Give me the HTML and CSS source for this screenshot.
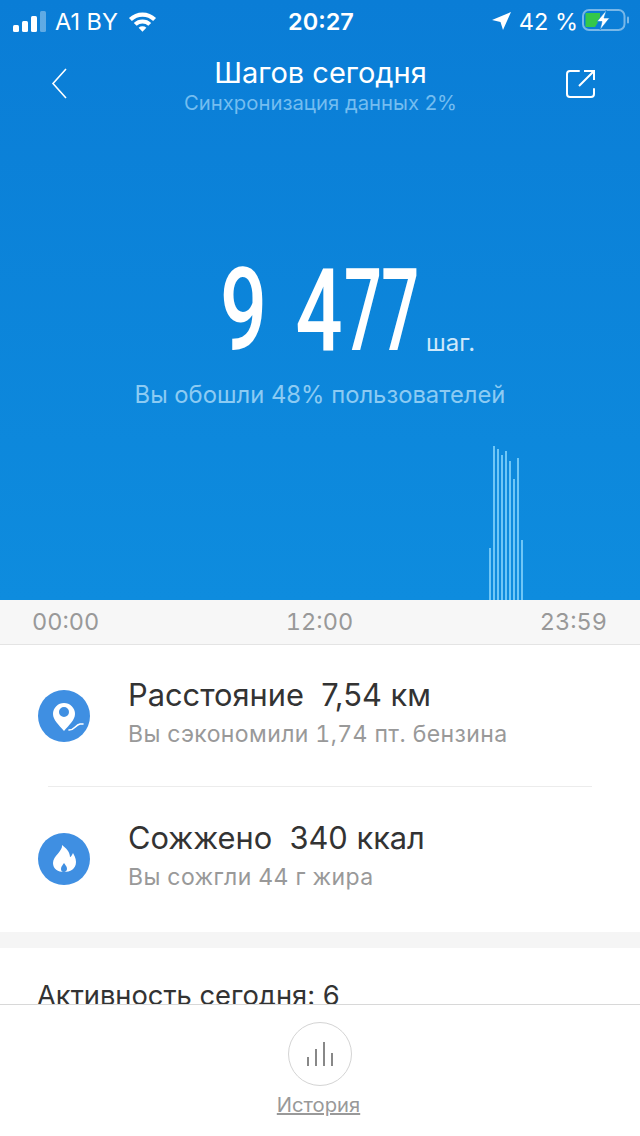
FILE: index.html
```html
<!DOCTYPE html>
<html lang="ru">
<head>
<meta charset="UTF-8">
<meta name="viewport" content="width=device-width, initial-scale=1.0">
<title>Шагов сегодня</title>
<link rel="stylesheet" href="styles.css">
</head>
<body>

<div class="content">
    <section class="hero">
        <div class="status-bar">
            <div class="status-left">
                <svg class="signal" width="34" height="21" viewBox="0 0 34 21">
                    <rect x="0" y="14" width="6" height="7" rx="1.5" fill="#fff"/>
                    <rect x="9" y="10" width="6" height="11" rx="1.5" fill="#fff"/>
                    <rect x="18" y="5" width="6" height="16" rx="1.5" fill="#fff"/>
                    <rect x="27" y="0" width="6" height="21" rx="1.5" fill="#fff" opacity="0.35"/>
                </svg>
                <span>A1 BY</span>
                <svg class="wifi" width="29" height="22" viewBox="0 0 30 22">
                    <path d="M1 8 A20 20 0 0 1 29 8 L26 11 A16 16 0 0 0 4 11 Z" fill="#fff"/>
                    <path d="M6 13 A13 13 0 0 1 24 13 L21 16 A9 9 0 0 0 9 16 Z" fill="#fff"/>
                    <path d="M11 18 A6 6 0 0 1 19 18 L15 22 Z" fill="#fff"/>
                </svg>
            </div>
            <div class="status-time">20:27</div>
            <div class="status-right">
                <svg width="19" height="18" viewBox="0 0 19 18"><path d="M19 0 L11 18 L8.500 10 L0 8 Z" fill="#fff"/></svg>
                <span class="battery-text">42 %</span>
                <svg class="battery" width="47" height="24" viewBox="0 0 47 24">
                    <rect x="1" y="2" width="41.500" height="20" rx="6" fill="none" stroke="#fff" stroke-opacity="0.45" stroke-width="2"/>
                    <rect x="45" y="8.500" width="2" height="7" rx="1" fill="#fff" opacity="0.45"/>
                    <path d="M3.500 5 H18 V11 L13 19 H3.500 Z" fill="#34c84a"/>
                    <path d="M24.500 2 L15 13.500 H20 L18 22 L27.500 10 H22 Z" fill="#fff" stroke="#0a80d8" stroke-width="0.600"/>
                </svg>
            </div>
        </div>

        <header class="nav">
            <svg class="nav-back" width="20" height="32" viewBox="0 0 20 32"><path d="M16 1 L3 15.500 L16 30" fill="none" stroke="#fff" stroke-width="1.600"/></svg>
            <div class="nav-title">
                <h1>Шагов сегодня</h1>
                <p>Синхронизация данных 2%</p>
            </div>
            <svg class="nav-share" width="30" height="30" viewBox="0 0 30 30">
                <path d="M13 2 H4 Q1 2 1 5 V25 Q1 28 4 28 H25 Q28 28 28 25 V20" fill="none" stroke="#fff" stroke-width="2" stroke-linecap="round"/>
                <path d="M13 17 L27 3 M18 2 H28 V11" fill="none" stroke="#fff" stroke-width="2"/>
            </svg>
        </header>

        <div class="steps">
            <div class="steps-count"><span class="digits-wide">9 4</span><span class="digits-narrow">77</span></div>
            <div class="steps-unit">шаг.</div>
        </div>
        <p class="steps-note">Вы обошли 48% пользователей</p>

        <div class="chart">
            <i style="height:52px"></i>
            <i style="height:154px"></i>
            <i style="height:151px"></i>
            <i style="height:145px"></i>
            <i style="height:149px"></i>
            <i style="height:139px"></i>
            <i style="height:121px"></i>
            <i style="height:142px"></i>
            <i style="height:60px"></i>
        </div>
    </section>

    <div class="timeline">
        <span>00:00</span>
        <span>12:00</span>
        <span>23:59</span>
    </div>

    <section class="stats">
        <div class="stat stat-first">
            <svg class="stat-icon" width="52" height="52" viewBox="0 0 52 52">
                <circle cx="26" cy="26" r="26" fill="#3f8fe2"/>
                <path fill-rule="evenodd" d="M26 13 A11 11 0 0 1 37 24 C37 30 31 35 26 41 C21 35 15 30 15 24 A11 11 0 0 1 26 13 Z M26 17 A5 5 0 1 0 26 27 A5 5 0 0 0 26 17 Z" fill="#fff"/>
                <path d="M31 40 C37 40 37 35 42 34 H45" fill="none" stroke="#fff" stroke-width="1.600" stroke-linecap="round"/>
            </svg>
            <div class="stat-text">
                <div class="stat-title">Расстояние&nbsp; 7,54 км</div>
                <div class="stat-sub">Вы сэкономили 1,74 пт. бензина</div>
            </div>
        </div>
        <div class="stat stat-second">
            <svg class="stat-icon" width="52" height="52" viewBox="0 0 52 52">
                <circle cx="26" cy="26" r="26" fill="#3f8fe2"/>
                <path fill-rule="evenodd" d="M24 12 C25 18 15 23 15 30 C15 36 20 39 26 39 C32 39 38 36 38 29 C38 25 36 22 35 20 C34 22 33 24 32 24 C32 19 28 15 24 12 Z M26 30 C27 32 29 33 29 36 C29 38 27 39 26 39 C24 39 23 38 23 36 C23 33 25 32 26 30 Z" fill="#fff"/>
            </svg>
            <div class="stat-text">
                <div class="stat-title">Сожжено&nbsp; 340 ккал</div>
                <div class="stat-sub">Вы сожгли 44 г жира</div>
            </div>
        </div>
    </section>

    <div class="spacer"></div>

    <div class="activity">Активность сегодня: 6</div>
</div>

<nav class="tabbar">
    <div class="tab-circle">
        <svg width="26" height="24" viewBox="0 0 26 24">
            <path d="M1 15 V24 M9 7 V24 M17 0 V24 M25 11 V24" fill="none" stroke="#888" stroke-width="2"/>
        </svg>
    </div>
    <a class="tab-label" href="#">История</a>
</nav>

</body>
</html>
```
FILE: styles.css
```css
* {
    box-sizing: border-box;
}

html,
body {
    margin: 0;
    height: 1136px;
    overflow: hidden;
}

body {
    display: flex;
    flex-direction: column;
    background-color: #fff;
    font-family: Inter, "Noto Sans", sans-serif;
    color: #333;
}

.content {
    flex: 0 0 1004px;
    overflow: hidden;
}

.hero {
    display: flex;
    flex-direction: column;
    height: 600px;
    background: linear-gradient(#0a7dd6, #0e8cde);
    color: #fff;
}

.status-bar {
    display: flex;
    align-items: center;
    justify-content: space-between;
    height: 40px;
    padding: 2px 11px 0 13px;
    font-size: 23.5px;
}

.status-left,
.status-right {
    display: flex;
    align-items: center;
    width: 200px;
}

.status-left span {
    margin: 0 10px 0 8px;
}

.status-right {
    justify-content: flex-end;
}

.battery-text {
    margin: 0 4px 0 8px;
}

.battery {
    margin-top: -2px;
}

.status-time {
    font-weight: 600;
}

.nav {
    display: flex;
    align-items: flex-start;
    justify-content: space-between;
    height: 225px;
    padding: 14px 44px 0 50px;
}

.nav-back {
    margin-top: 14px;
}

.nav-share {
    margin-top: 15px;
}

.nav-title {
    margin-left: 5px;
    text-align: center;
}

.nav-title h1 {
    margin: 0;
    font-size: 29px;
    font-weight: 400;
    line-height: 38px;
}

.nav-title p {
    margin: 0;
    font-size: 20.3px;
    line-height: 22px;
    color: #74bdf0;
}

.steps {
    display: flex;
    align-items: flex-end;
    height: 92px;
    padding-left: 220px;
}

.steps-count {
    display: flex;
    width: 206px;
    height: 92px;
}

.steps-count span {
    display: block;
    font-family: Roboto, sans-serif;
    font-size: 115px;
    font-weight: 500;
    line-height: 92px;
    white-space: pre;
    transform-origin: left center;
}

.digits-wide {
    width: 124px;
    word-spacing: 11px;
    transform: scaleX(0.72);
}

.digits-narrow {
    letter-spacing: -1px;
    transform: scaleX(0.58);
}

.steps-unit {
    margin-bottom: 2px;
    font-size: 24px;
    line-height: 24px;
    color: #cfe8fa;
}

.steps-note {
    margin: 23px 0 0;
    text-align: center;
    font-size: 23.8px;
    line-height: 30px;
    color: #8ccbf3;
}

.chart {
    display: flex;
    align-items: flex-end;
    gap: 2px;
    margin-top: auto;
    padding-left: 489px;
}

.chart i {
    display: block;
    width: 2px;
    background-color: #6fc6f6;
}

.timeline {
    display: flex;
    justify-content: space-between;
    height: 45px;
    padding: 0 33px 0 32px;
    background-color: #f7f7f7;
    border-bottom: 1px solid #e4e4e4;
    font-size: 23.5px;
    font-variant-numeric: tabular-nums;
    line-height: 44px;
    color: #999;
}

.stats {
    height: 287px;
}

.stat {
    display: flex;
    align-items: center;
    gap: 38px;
    margin: 0 48px 0 38px;
    height: 142px;
}

.stat-first {
    border-bottom: 1px solid #ececec;
    margin-left: 48px;
}

.stat-first .stat-icon {
    margin-left: -10px;
}

.stat-second {
    height: 144px;
}

.stat-icon {
    flex: none;
}

.stat-text {
    padding-bottom: 7px;
}

.stat-title {
    font-size: 30.8px;
    line-height: 38px;
    color: #333;
}

.stat-sub {
    margin-top: 5px;
    font-size: 23px;
    font-variant-numeric: tabular-nums;
    letter-spacing: 0.4px;
    line-height: 30px;
    color: #999;
}

.spacer {
    height: 16px;
    background-color: #f5f5f5;
}

.activity {
    padding: 30px 37px 0;
    font-size: 27.3px;
    line-height: 36px;
    color: #333;
}

.tabbar {
    flex: 1;
    display: flex;
    flex-direction: column;
    align-items: center;
    padding-top: 17px;
    border-top: 1px solid #d8d8d8;
    background-color: #fff;
}

.tab-circle {
    display: flex;
    align-items: center;
    justify-content: center;
    width: 64px;
    height: 64px;
    border: 1px solid #d4d4d4;
    border-radius: 50%;
}

.tab-label {
    margin: 6px 3px 0 0;
    font-size: 20.2px;
    line-height: 26px;
    color: #999;
    text-decoration-thickness: 2px;
}
```
